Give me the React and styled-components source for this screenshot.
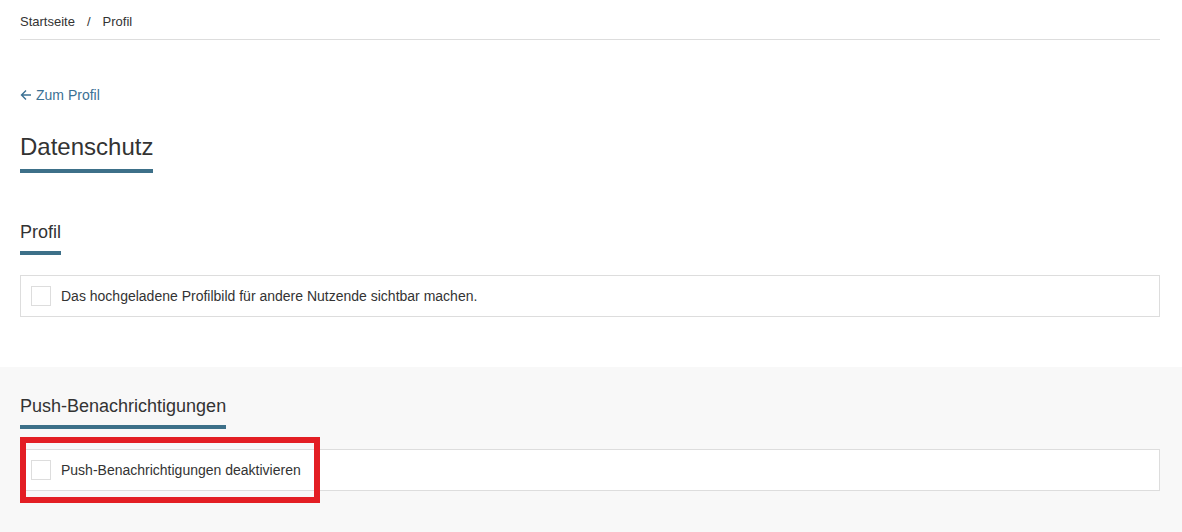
import styled, { createGlobalStyle } from 'styled-components';

const GlobalStyle = createGlobalStyle`
  html, body {
    margin: 0;
    padding: 0;
    background: #fff;
    font-family: "Liberation Sans", Arial, sans-serif;
    color: #333;
  }
`;

export default function App() {
  return (
    <>
      <GlobalStyle />
      <Page>
        <Breadcrumb>
          <Crumb>Startseite</Crumb>
          <Separator>/</Separator>
          <Crumb>Profil</Crumb>
        </Breadcrumb>

        <BackLink href="#">
          <svg width="12" height="12" viewBox="0 0 12 12" fill="none" stroke="currentColor" strokeWidth="1.4">
            <path d="M11 6H1.5M6 1.5L1.5 6L6 10.5" />
          </svg>
          Zum Profil
        </BackLink>

        <PageTitle>Datenschutz</PageTitle>

        <SectionTitle>Profil</SectionTitle>
        <OptionBox>
          <Checkbox />
          <OptionLabel>Das hochgeladene Profilbild für andere Nutzende sichtbar machen.</OptionLabel>
        </OptionBox>
      </Page>

      <GraySection>
        <SectionTitle $top={0}>Push-Benachrichtigungen</SectionTitle>
        <Highlighted>
          <OptionBox $top={0}>
            <Checkbox />
            <OptionLabel>Push-Benachrichtigungen deaktivieren</OptionLabel>
          </OptionBox>
          <Marker />
        </Highlighted>
      </GraySection>
    </>
  );
}

const Page = styled.div`
  padding: 0 22px 50px 20px;
`;

const Breadcrumb = styled.nav`
  display: flex;
  align-items: center;
  padding: 14px 0 9px;
  line-height: 16px;
  font-size: 13px;
  color: #333;
  border-bottom: 1px solid #ddd;
`;

const Crumb = styled.span``;

const Separator = styled.span`
  margin: 0 12px;
`;

const BackLink = styled.a`
  display: inline-flex;
  align-items: center;
  gap: 4px;
  margin-top: 45px;
  line-height: 20px;
  font-size: 14px;
  color: #3b7194;
  text-decoration: none;
`;

const PageTitle = styled.h1`
  display: table;
  margin: 28px 0 0;
  padding-bottom: 8px;
  font-size: 24px;
  line-height: 28px;
  font-weight: normal;
  color: #333;
  border-bottom: 4px solid #3d7089;
`;

const SectionTitle = styled.h2`
  display: table;
  margin: ${(p) => p.$top ?? 48}px 0 0;
  padding-bottom: 8px;
  font-size: 18px;
  line-height: 22px;
  font-weight: normal;
  color: #333;
  border-bottom: 4px solid #3d7089;
`;

const OptionBox = styled.div`
  display: flex;
  align-items: center;
  gap: 10px;
  margin-top: ${(p) => p.$top ?? 20}px;
  padding: 10px;
  background: #fff;
  border: 1px solid #ddd;
`;

const Checkbox = styled.span`
  width: 18px;
  height: 18px;
  border: 1px solid #ddd;
  background: #fff;
  flex-shrink: 0;
`;

const OptionLabel = styled.span`
  font-size: 14px;
  line-height: 20px;
  color: #333;
`;

const GraySection = styled.section`
  background: #f8f8f8;
  padding: 28px 22px 41px 20px;
`;

const Highlighted = styled.div`
  position: relative;
  margin-top: 20px;
`;

const Marker = styled.div`
  position: absolute;
  left: 0;
  top: -12px;
  width: 300px;
  height: 66px;
  box-sizing: border-box;
  border: 6px solid #e31e24;
  pointer-events: none;
`;
